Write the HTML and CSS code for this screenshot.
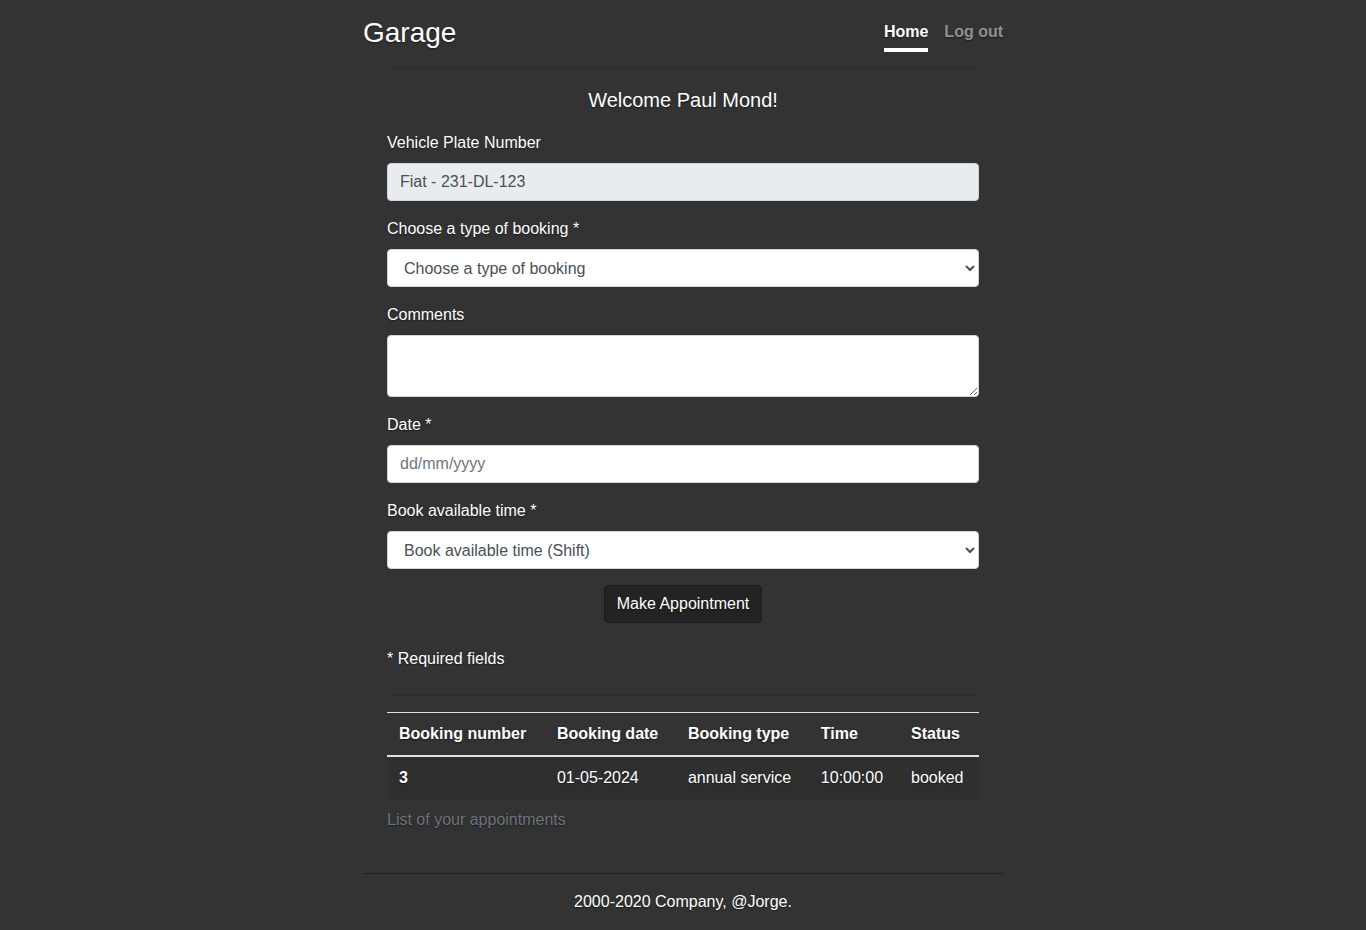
FILE: index.html
```html
<!DOCTYPE html>
<html lang="en">
<head>
<meta charset="utf-8">
<title>Garage</title>
<link rel="stylesheet" href="styles.css">
</head>
<body>
<div class="cover">
  <header class="masthead">
    <h3 class="brand">Garage</h3>
    <nav class="nav">
      <a class="nav-link active" href="#">Home</a>
      <a class="nav-link" href="#">Log out</a>
    </nav>
  </header>
  <main class="main">
    <hr class="rule">
    <h5 class="welcome">Welcome Paul Mond!</h5>
    <form class="form">
      <div class="group">
        <label class="label">Vehicle Plate Number</label>
        <input class="control readonly" type="text" value="Fiat - 231-DL-123" readonly>
      </div>
      <div class="group">
        <label class="label">Choose a type of booking *</label>
        <select class="control select">
          <option>Choose a type of booking</option>
        </select>
      </div>
      <div class="group">
        <label class="label">Comments</label>
        <textarea class="control textarea" rows="2"></textarea>
      </div>
      <div class="group">
        <label class="label">Date *</label>
        <input class="control" type="text" placeholder="dd/mm/yyyy">
      </div>
      <div class="group last">
        <label class="label">Book available time *</label>
        <select class="control select">
          <option>Book available time (Shift)</option>
        </select>
      </div>
      <div class="actions">
        <button class="btn" type="button">Make Appointment</button>
      </div>
    </form>
    <p class="required">* Required fields</p>
    <hr class="rule rule-table">
    <table class="table">
      <caption>List of your appointments</caption>
      <thead>
        <tr>
          <th>Booking number</th>
          <th>Booking date</th>
          <th>Booking type</th>
          <th>Time</th>
          <th>Status</th>
        </tr>
      </thead>
      <tbody>
        <tr>
          <th>3</th>
          <td>01-05-2024</td>
          <td>annual service</td>
          <td>10:00:00</td>
          <td>booked</td>
        </tr>
      </tbody>
    </table>
  </main>
  <footer class="footer">
    <p>2000-2020 Company, @Jorge.</p>
  </footer>
</div>
</body>
</html>
```

FILE: styles.css
```css
* { box-sizing: border-box; }
html, body { height: 100%; }
body {
  margin: 0;
  background: #333;
  color: #fff;
  font-family: "Liberation Sans", Arial, sans-serif;
  font-size: 16px;
  line-height: 1.5;
  text-shadow: 0 0.05rem 0.1rem rgba(0, 0, 0, 0.5);
}
.cover {
  width: 640px;
  margin: 0 auto;
  min-height: 100vh;
  display: flex;
  flex-direction: column;
}
.masthead {
  display: flex;
  justify-content: space-between;
  align-items: flex-start;
  padding-top: 15px;
}
.brand {
  margin: 0;
  font-size: 28px;
  font-weight: 400;
  line-height: 1.2;
  padding-top: 1px;
}
.nav { display: flex; margin-top: 1px; }
.nav-link {
  font-weight: 700;
  color: rgba(255, 255, 255, 0.5);
  text-decoration: none;
  padding: 4px 0;
  border-bottom: 4px solid transparent;
  margin-left: 16px;
}
.nav-link.active {
  color: #fff;
  border-bottom-color: #fff;
}
.main { padding: 0 24px; }
.rule {
  border: 0;
  border-top: 1px solid rgba(0, 0, 0, 0.1);
  margin: 15px 0 0;
}
.welcome {
  margin: 20px 0 19px;
  text-align: center;
  font-size: 20px;
  font-weight: 400;
  line-height: 1.2;
}
.form { margin: 0; }
.group { margin-bottom: 16px; }
.group.last { margin-bottom: 0; }
.label {
  display: block;
  margin-bottom: 8px;
}
.control {
  display: block;
  width: 100%;
  height: 38px;
  padding: 6px 12px;
  font-family: inherit;
  font-size: 16px;
  line-height: 1.5;
  color: #495057;
  background: #fff;
  border: 1px solid #ced4da;
  border-radius: 4px;
  margin: 0;
}
.control::placeholder { color: #6c757d; opacity: 1; }
.readonly { background: #e9ecef; }
.textarea { height: 62px; resize: vertical; }
.actions {
  display: flex;
  justify-content: center;
  margin-top: 16px;
}
.btn {
  font-family: inherit;
  font-size: 16px;
  line-height: 1.5;
  color: #fff;
  background: #232323;
  border: 1px solid #1b1b1b;
  border-radius: 4px;
  padding: 6px 12px;
  text-shadow: 0 0.05rem 0.1rem rgba(0, 0, 0, 0.5);
}
.required { margin: 24px 0 0; }
.rule-table { margin: 24px 0 16px; }
.table {
  width: 100%;
  border-collapse: collapse;
  caption-side: bottom;
}
.table caption {
  text-align: left;
  color: #6c757d;
  padding-top: 9px;
}
.table th, .table td {
  text-align: left;
  padding: 9px 12px;
  vertical-align: top;
}
.table thead th {
  border-top: 1px solid #dee2e6;
  border-bottom: 2px solid #dee2e6;
  font-weight: 700;
}
.table tbody tr { background: #2f2f2f; }
.footer {
  margin-top: auto;
  border-top: 1px solid #1f1f1f;
  padding: 16px 0 16px;
  text-align: center;
}
.footer p { margin: 0; }
```
